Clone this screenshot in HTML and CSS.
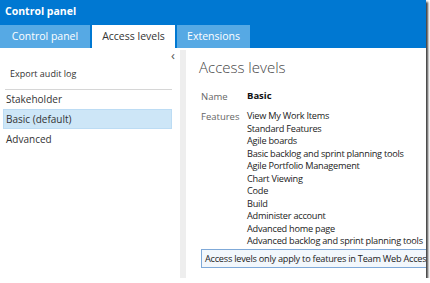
FILE: index.html
```html
<!DOCTYPE html>
<html>
<head>
  <link rel="stylesheet" href="styles.css">
</head>
<body>
  <div class="window">
    <div class="header">
      <div class="title">Control panel</div>
      <div class="tabs">
        <div class="tab">Control panel</div>
        <div class="tab active">Access levels</div>
        <div class="tab">Extensions</div>
      </div>
    </div>

    <div class="main">
      <div class="sidebar">
        <div class="collapse">&#8249;</div>
        <div class="export">Export audit log</div>
        <div class="levels">
          <div class="level">Stakeholder</div>
          <div class="level selected">Basic (default)</div>
          <div class="level">Advanced</div>
        </div>
      </div>
      <div class="splitter"></div>
      <div class="content">
        <h1>Access levels</h1>
        <div class="field">
          <div class="field-label">Name</div>
          <div class="field-value name">Basic</div>
        </div>
        <div class="field">
          <div class="field-label">Features</div>
          <div class="field-value">
            <div>View My Work Items</div>
            <div>Standard Features</div>
            <div>Agile boards</div>
            <div>Basic backlog and sprint planning tools</div>
            <div>Agile Portfolio Management</div>
            <div>Chart Viewing</div>
            <div>Code</div>
            <div>Build</div>
            <div>Administer account</div>
            <div>Advanced home page</div>
            <div>Advanced backlog and sprint planning tools</div>
          </div>
        </div>
        <div class="info">Access levels only apply to features in Team Web Access</div>
      </div>
    </div>
  </div>
</body>
</html>
```

FILE: styles.css
```css
body {
  margin: 0;
  background: #ffffff;
  font-family: "Open Sans", Arial, sans-serif;
  font-size: 9.5px;
  color: #222;
}

.window {
  width: 426px;
  height: 278px;
  background: #ffffff;
  box-shadow: 2px 2px 2px rgba(0, 0, 0, 0.75);
  display: flex;
  flex-direction: column;
  overflow: hidden;
}

.header {
  background: #0078d2;
  height: 48px;
  display: flex;
  flex-direction: column;
}

.title {
  color: #ffffff;
  font-weight: bold;
  font-size: 10.5px;
  height: 25px;
  line-height: 22px;
  padding-left: 5px;
}

.tabs {
  display: flex;
  gap: 2px;
  height: 23px;
}

.tab {
  background: #56a9e4;
  color: #ffffff;
  font-size: 10.5px;
  line-height: 23px;
  text-align: center;
  width: 90px;
}

.tab.active {
  background: #ffffff;
  color: #333;
  width: 83px;
}

.tab:last-child {
  width: 73px;
}

.main {
  flex: 1;
  display: flex;
  padding-top: 2px;
  min-width: 0;
}

.sidebar {
  width: 180px;
  flex-shrink: 0;
  display: flex;
  flex-direction: column;
}

.collapse {
  align-self: flex-end;
  margin-right: 5px;
  height: 12px;
  line-height: 10px;
  font-size: 13px;
  color: #555;
}

.export {
  margin: 0 8px 0 5px;
  padding: 5px 0 9px 5px;
  font-size: 9px;
  color: #333;
  border-bottom: 1px solid #d6d6d6;
}

.levels {
  margin-top: -1px;
  padding: 0 8px 0 3px;
}

.level {
  padding: 0 2px;
  height: 18px;
  line-height: 18px;
  border: 1px solid transparent;
  color: #333;
  font-size: 10px;
}

.level.selected {
  background: #cde6f7;
  border-color: #bcdcf4;
}

.splitter {
  width: 6px;
  flex-shrink: 0;
  background: #eeeeee;
}

.content {
  flex: 1;
  min-width: 0;
  overflow: hidden;
  padding: 7px 0 0 13px;
  white-space: nowrap;
}

h1 {
  margin: 0 0 13px;
  font-size: 15px;
  font-weight: 300;
  color: #444;
}

.field {
  display: flex;
  margin-bottom: 7px;
}

.field-label {
  width: 46px;
  flex-shrink: 0;
  padding-left: 2px;
  color: #666;
}

.field-value {
  font-size: 9.2px;
  letter-spacing: -0.25px;
  line-height: 12.5px;
}

.name {
  font-size: 9.5px;
  letter-spacing: 0;
  font-weight: bold;
  color: #111;
}

.info {
  margin-left: 2px;
  margin-top: -6px;
  border: 1px solid #7fa9d8;
  border-right: none;
  background: #f2f7fc;
  padding: 0 3px;
  height: 17px;
  line-height: 17px;
  font-size: 9.2px;
  letter-spacing: -0.25px;
}
```
